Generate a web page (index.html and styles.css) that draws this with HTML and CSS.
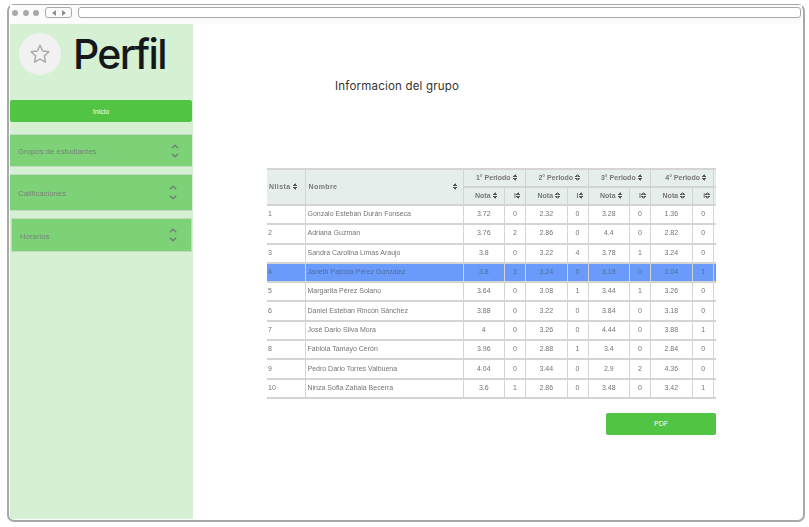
FILE: index.html
```html
<!DOCTYPE html>
<html lang="en">

<head>
    <meta charset="UTF-8">
    <meta name="viewport" content="width=device-width, initial-scale=1.0">
    <title>Perfil</title>
    <link rel="stylesheet" href="styles.css">
</head>

<body>
    <div class="window">
        <div class="toolbar">
            <span class="dot"></span>
            <span class="dot"></span>
            <span class="dot"></span>
            <div class="nav-btns">
                <span class="arrow-left"></span>
                <span class="arrow-right"></span>
            </div>
            <div class="address"></div>
        </div>

        <div class="main">
            <aside class="sidebar">
                <div class="profile">
                    <div class="avatar">
                        <svg width="22" height="22" viewBox="0 0 24 24" fill="none" stroke="#a9a9a9" stroke-width="1.6" stroke-linejoin="round">
                            <path d="M12 2.5l2.9 6.2 6.8.8-5 4.6 1.3 6.7-6-3.3-6 3.3 1.3-6.7-5-4.6 6.8-.8z" />
                        </svg>
                    </div>
                    <h1 class="title">Perfil</h1>
                </div>

                <button class="btn btn-home">Inicio</button>

                <div class="menu">
                    <div class="menu-item item-groups">
                        <span>Grupos de estudiantes</span>
                        <svg class="chevrons" width="8" height="14" viewBox="0 0 8 14" fill="none" stroke="#6f8272" stroke-width="1.5">
                            <path d="M.8 4.200L4 1.200l3.200 3" />
                            <path d="M.8 9.800L4 12.800l3.200-3" />
                        </svg>
                    </div>
                    <div class="menu-item item-grades">
                        <span>Calificaciones</span>
                        <svg class="chevrons" width="8" height="15" viewBox="0 0 8 15" fill="none" stroke="#6f8272" stroke-width="1.5">
                            <path d="M.8 4.200L4 1.200l3.200 3" />
                            <path d="M.8 10.800L4 13.800l3.200-3" />
                        </svg>
                    </div>
                    <div class="menu-item item-schedule">
                        <span>Horarios</span>
                        <svg class="chevrons" width="8" height="14" viewBox="0 0 8 14" fill="none" stroke="#6f8272" stroke-width="1.5">
                            <path d="M.8 4.200L4 1.200l3.200 3" />
                            <path d="M.8 9.800L4 12.800l3.200-3" />
                        </svg>
                    </div>
                </div>
            </aside>

            <section class="content">
                <h2 class="group-title">Informacion del grupo</h2>

                <div class="table-wrap">
                    <table class="grades">
                        <colgroup>
                            <col class="col-num">
                            <col class="col-name">
                            <col class="col-note">
                            <col class="col-f">
                            <col class="col-note">
                            <col class="col-f">
                            <col class="col-note">
                            <col class="col-f">
                            <col class="col-note">
                            <col class="col-last">
                        </colgroup>
                        <thead>
                            <tr>
                                <th rowspan="2" class="left">Nlista <i class="sort"></i></th>
                                <th rowspan="2" class="left">
                                    <div class="name-head">Nombre <i class="sort"></i></div>
                                </th>
                                <th colspan="2">1° Periodo <i class="sort"></i></th>
                                <th colspan="2">2° Periodo <i class="sort"></i></th>
                                <th colspan="2">3° Periodo <i class="sort"></i></th>
                                <th colspan="2">4° Periodo <i class="sort"></i></th>
                            </tr>
                            <tr>
                                <th>Nota <i class="sort"></i></th>
                                <th>I<i class="sort"></i></th>
                                <th>Nota <i class="sort"></i></th>
                                <th>I<i class="sort"></i></th>
                                <th>Nota <i class="sort"></i></th>
                                <th>I<i class="sort"></i></th>
                                <th>Nota <i class="sort"></i></th>
                                <th>I<i class="sort"></i></th>
                            </tr>
                        </thead>
                        <tbody>
                            <tr><td>1</td><td>Gonzalo Esteban Durán Fonseca</td><td>3.72</td><td>0</td><td>2.32</td><td>0</td><td>3.28</td><td>0</td><td>1.36</td><td>0</td></tr>
                            <tr><td>2</td><td>Adriana Guzman</td><td>3.76</td><td>2</td><td>2.86</td><td>0</td><td>4.4</td><td>0</td><td>2.82</td><td>0</td></tr>
                            <tr><td>3</td><td>Sandra Carolina Limas Araujo</td><td>3.8</td><td>0</td><td>3.22</td><td>4</td><td>3.78</td><td>1</td><td>3.24</td><td>0</td></tr>
                            <tr class="selected"><td>4</td><td>Janeth Patricia Pérez González</td><td>3.8</td><td>3</td><td>3.24</td><td>0</td><td>3.18</td><td>0</td><td>3.04</td><td>1</td></tr>
                            <tr><td>5</td><td>Margarita Pérez Solano</td><td>3.64</td><td>0</td><td>3.08</td><td>1</td><td>3.44</td><td>1</td><td>3.26</td><td>0</td></tr>
                            <tr><td>6</td><td>Daniel Esteban Rincón Sánchez</td><td>3.88</td><td>0</td><td>3.22</td><td>0</td><td>3.84</td><td>0</td><td>3.18</td><td>0</td></tr>
                            <tr><td>7</td><td>José Dario Silva Mora</td><td>4</td><td>0</td><td>3.26</td><td>0</td><td>4.44</td><td>0</td><td>3.88</td><td>1</td></tr>
                            <tr><td>8</td><td>Fabiola Tamayo Cerón</td><td>3.96</td><td>0</td><td>2.88</td><td>1</td><td>3.4</td><td>0</td><td>2.84</td><td>0</td></tr>
                            <tr><td>9</td><td>Pedro Dario Torres Valbuena</td><td>4.04</td><td>0</td><td>3.44</td><td>0</td><td>2.9</td><td>2</td><td>4.36</td><td>0</td></tr>
                            <tr><td>10</td><td>Ninza Sofia Zabala Becerra</td><td>3.6</td><td>1</td><td>2.86</td><td>0</td><td>3.48</td><td>0</td><td>3.42</td><td>1</td></tr>
                        </tbody>
                    </table>
                </div>

                <button class="btn btn-pdf">PDF</button>
            </section>
        </div>
    </div>
</body>

</html>
```

FILE: styles.css
```css
* {
    margin: 0;
    padding: 0;
    box-sizing: border-box;
}

body {
    width: 809px;
    height: 527px;
    overflow: hidden;
    padding: 4px 4px 5px 7px;
    background-color: #fff;
    font-family: "Liberation Sans", Arial, sans-serif;
}

.window {
    height: 518px;
    border: 2px solid #a8a8a8;
    border-top-width: 1px;
    border-radius: 7px;
    padding: 0 1px 0 1px;
    background-color: #fff;
}

/* browser bar */
.toolbar {
    height: 19px;
    display: flex;
    align-items: center;
    gap: 4.500px;
    padding: 2px 0 6px 2px;
    background-color: #fbfbfb;
}

.dot {
    width: 6px;
    height: 6px;
    border-radius: 50%;
    background-color: #a9a9a9;
}

.nav-btns {
    width: 27px;
    height: 11px;
    margin-left: 1.500px;
    border: 1px solid #a8a8a8;
    border-radius: 3px;
    display: flex;
    align-items: center;
    justify-content: center;
    gap: 6px;
}

.arrow-left {
    border-right: 4px solid #8f8f8f;
    border-top: 3px solid transparent;
    border-bottom: 3px solid transparent;
}

.arrow-right {
    border-left: 4px solid #8f8f8f;
    border-top: 3px solid transparent;
    border-bottom: 3px solid transparent;
}

.address {
    flex: 1;
    height: 11px;
    margin-left: 1.500px;
    margin-right: 1px;
    border: 1px solid #a8a8a8;
    border-radius: 3px;
    background-color: #fff;
}

.main {
    display: flex;
    height: 495px;
}

/* sidebar */
.sidebar {
    width: 183px;
    background-color: #d5f0d2;
}

.profile {
    height: 76px;
    display: flex;
    align-items: flex-start;
    padding: 9px 0 0 9px;
}

.avatar {
    width: 42px;
    height: 42px;
    border-radius: 50%;
    background-color: #f1f1f1;
    display: flex;
    align-items: center;
    justify-content: center;
}

.title {
    margin: -4px 0 0 12px;
    font-family: Inter, "Liberation Sans", sans-serif;
    font-size: 41px;
    line-height: 50px;
    font-weight: 500;
    letter-spacing: -1.700px;
    color: #14181a;
}

.btn {
    display: block;
    border: none;
    border-radius: 2px;
    background-color: #52c443;
    color: #f4fbf0;
    font-family: "Liberation Sans", Arial, sans-serif;
    font-size: 7px;
    text-align: center;
}

.btn-home {
    width: 182px;
    height: 22px;
}

.menu {
    margin-top: 12px;
}

.menu-item {
    display: flex;
    align-items: center;
    justify-content: space-between;
    background-color: #7dd277;
    color: #79847c;
    font-size: 7.800px;
    border-bottom: 1px solid #c4d8c2;
    border-top: 1px solid #c4d8c2;
}

.menu-item span {
    padding-top: 2px;
}

.item-groups {
    width: 182px;
    height: 33px;
    padding: 0 13px 0 8px;
}

.item-grades {
    width: 182px;
    height: 37px;
    margin-top: 7px;
    padding: 0 15px 0 8px;
}

.item-schedule {
    width: 181px;
    height: 34px;
    margin: 7px 0 0 1px;
    padding: 0 14px 0 8px;
    border: 1px solid #c4d8c2;
}

/* content */
.content {
    flex: 1;
}

.group-title {
    margin: 54px 0 0 142px;
    font-family: Inter, "Liberation Sans", sans-serif;
    font-size: 11.500px;
    line-height: 16px;
    font-weight: 400;
    letter-spacing: .2px;
    color: #333;
}

.table-wrap {
    width: 449px;
    margin: 74px 0 0 74px;
}

.grades {
    width: 449px;
    table-layout: fixed;
    border-collapse: collapse;
    font-size: 7px;
    color: #777;
    filter: blur(.3px);
}

.col-num {
    width: 38px;
}

.col-name {
    width: 158px;
}

.col-note {
    width: 41.500px;
}

.col-f {
    width: 21px;
}

.col-last {
    width: 24px;
}

.grades th,
.grades td {
    border: 1px solid #d4d4d4;
    text-align: center;
    font-weight: normal;
}

.grades tr > :first-child {
    border-left: none;
}

.grades tr > :last-child {
    border-right: none;
    box-shadow: inset -2px 0 0 #fff, inset -3px 0 0 #d4d4d4;
}

.grades thead th {
    height: 18px;
    padding: 0 0 2px 5px;
    background-color: #e6eeeb;
    font-weight: bold;
    color: #777;
    border-top: 2px solid #d4d4d4;
    border-bottom: 2px solid #d4d4d4;
    white-space: nowrap;
}

.grades thead tr > th:last-child {
    box-shadow: inset -2px 0 0 #e6eeeb, inset -3px 0 0 #d4d4d4;
}

.grades thead tr:first-child > th[rowspan] {
    box-shadow: none;
}

.grades thead tr + tr th {
    border-top-width: 1px;
}

.grades thead th.left {
    text-align: left;
    padding-left: 2px;
    letter-spacing: .4px;
}

.name-head {
    display: flex;
    justify-content: space-between;
    align-items: center;
    padding: 0 5px 0 1px;
}

.grades td {
    height: 19.300px;
    padding-bottom: 2px;
    border-bottom-width: 2px;
    color: #747474;
}

.grades td:first-child {
    text-align: left;
    padding-left: 1px;
}

.grades td:nth-child(2) {
    text-align: left;
    padding-left: 2px;
}

.grades td:last-child {
    padding-right: 2px;
}

.selected td {
    background-color: #6a9bfb;
    color: #4e6f9e;
}

.grades .selected td:last-child {
    box-shadow: inset -2px 0 0 #6a9bfb, inset -3px 0 0 #d4d4d4;
}

.sort {
    display: inline-block;
    width: 5px;
    height: 7px;
    vertical-align: -1px;
    background:
        linear-gradient(to top left, #555 50%, transparent 51%) left top / 2.5px 3px no-repeat,
        linear-gradient(to top right, #555 50%, transparent 51%) right top / 2.5px 3px no-repeat,
        linear-gradient(to bottom left, #555 50%, transparent 51%) left bottom / 2.5px 3px no-repeat,
        linear-gradient(to bottom right, #555 50%, transparent 51%) right bottom / 2.5px 3px no-repeat;
}

.btn-pdf {
    width: 110px;
    height: 22px;
    margin: 14px 0 0 413px;
}
```
